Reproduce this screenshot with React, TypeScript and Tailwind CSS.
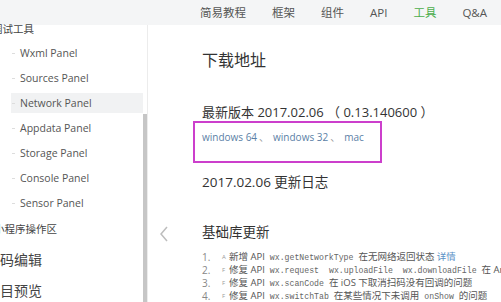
import React from "react";

const navItems = ["简易教程", "框架", "组件", "API", "工具", "Q&A"];
const panels = [
  "Wxml Panel",
  "Sources Panel",
  "Network Panel",
  "Appdata Panel",
  "Storage Panel",
  "Console Panel",
  "Sensor Panel",
];

const font = { fontFamily: '"Open Sans", "Noto Sans CJK SC", sans-serif' };

const Code = ({ children }: { children: React.ReactNode }) => (
  <span className="font-['Liberation_Mono',monospace] text-[8.2px] text-[#666] mx-[5px]">{children}</span>
);

const Row = ({ n, tag, children }: { n: number; tag: string; children: React.ReactNode }) => (
  <div className="flex items-center h-[13px] whitespace-nowrap">
    <span className="w-[20px] text-[10px] text-[#888]">{n}.</span>
    <span className="w-[7px] text-[6px] text-[#999]">{tag}</span>
    <span className="text-[#555]">{children}</span>
  </div>
);

export default function App() {
  return (
    <div className="w-[501px] h-[302px] overflow-hidden bg-white flex flex-col" style={font}>
      <div className="h-[25px] shrink-0 bg-[#f4f5f6] flex items-center justify-end pr-[14px] gap-[26px] text-[11.5px] text-[#555]">
        {navItems.map((item) => (
          <span key={item} className={item === "工具" ? "text-[#4cae4c]" : ""}>
            {item}
          </span>
        ))}
      </div>
      <div className="flex flex-1 min-h-0">
        <div className="relative w-[148px] shrink-0 border-r border-[#ececec] text-[#555]">
          <div className="h-[14px] leading-[14px] -mt-[3px] -ml-[8px] text-[10.5px] text-[#444] whitespace-nowrap">调试工具</div>
          <div className="mt-[7px] flex flex-col gap-[5px]">
            {panels.map((p) => (
              <div
                key={p}
                className={`relative ml-[11px] mr-[4px] h-[20px] leading-[20px] pl-[9px] text-[10.5px] ${
                  p === "Network Panel" ? "bg-[#f1f2f3]" : ""
                }`}
              >
                <span className="absolute left-[1px] top-[10px] w-[3px] h-px bg-[#ddd]" />
                {p}
              </div>
            ))}
          </div>
          <div className="mt-[9px] h-[14px] leading-[14px] -ml-[6px] text-[10.5px] text-[#444] whitespace-nowrap">小程序操作区</div>
          <div className="mt-[14px] h-[20px] leading-[20px] -ml-[14px] text-[14px] text-[#444] whitespace-nowrap">代码编辑</div>
          <div className="mt-[11px] h-[20px] leading-[20px] -ml-[14px] text-[14px] text-[#444] whitespace-nowrap">项目预览</div>
          <div className="absolute right-[0px] top-[89px] bottom-0 w-[4px] bg-[#c6c6c6]" />
        </div>
        <div className="relative flex-1 pl-[54px] text-[#333]">
          <div className="absolute left-[11px] top-[201px]">
            <svg width="10" height="16" viewBox="0 0 10 16" fill="none">
              <path d="M8 1L2 8l6 7" stroke="#bdbdbd" strokeWidth="1.5" />
            </svg>
          </div>
          <div className="mt-[25px] h-[20px] leading-[20px] text-[16px]">下载地址</div>
          <div className="mt-[33px] h-[18px] leading-[18px] text-[13px] whitespace-nowrap">
            最新版本 2017.02.06 （ 0.13.140600 ）
          </div>
          <div className="-ml-[9px] w-[189px] h-[42px] border-2 border-[#cc3fcc] pl-[7px] pt-[7px]">
            <div className="h-[14px] leading-[14px] text-[10px] text-[#5b7fa6] whitespace-nowrap">
              windows 64<span className="ml-[2px] mr-[4px] text-[#999]">、</span>windows 32
              <span className="ml-[2px] mr-[4px] text-[#999]">、</span>mac
            </div>
          </div>
          <div className="mt-[10px] h-[18px] leading-[18px] text-[13.5px]">2017.02.06 更新日志</div>
          <div className="mt-[32px] h-[18px] leading-[18px] text-[13.5px]">基础库更新</div>
          <div className="mt-[10px] text-[9.5px]">
            <Row n={1} tag="A">
              新增 API<Code>wx.getNetworkType</Code>在无网络返回状态 <span className="text-[#5b8fc6]">详情</span>
            </Row>
            <Row n={2} tag="F">
              修复 API<Code>wx.request</Code>
              <Code>wx.uploadFile</Code>
              <Code>wx.downloadFile</Code>在 Android 下的问题
            </Row>
            <Row n={3} tag="F">
              修复 API<Code>wx.scanCode</Code>在 iOS 下取消扫码没有回调的问题
            </Row>
            <Row n={4} tag="F">
              修复 API<Code>wx.switchTab</Code>在某些情况下未调用<Code>onShow</Code>的问题
            </Row>
          </div>
        </div>
      </div>
    </div>
  );
}
